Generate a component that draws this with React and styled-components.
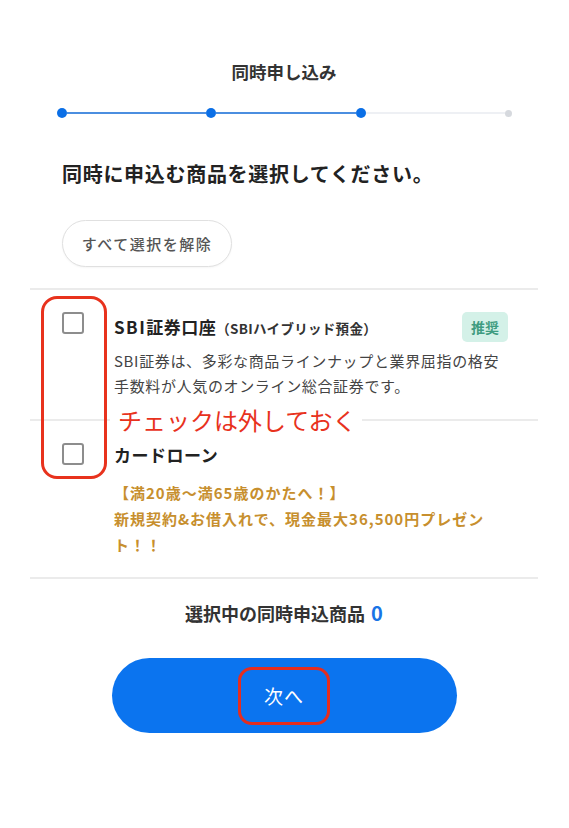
import React from 'react';
import styled, { createGlobalStyle } from 'styled-components';

const GlobalStyle = createGlobalStyle`
  html, body {
    margin: 0;
    padding: 0;
    background: #ffffff;
  }
  body {
    font-family: "Noto Sans CJK JP", "Noto Sans", sans-serif;
    color: #222;
  }
`

const Page = styled.div`
  width: 508px;
  margin-left: 30px;
  padding-top: 60px;
  padding-bottom: 80px;
`

const Title = styled.h1`
  margin: 0;
  text-align: center;
  font-size: 17.5px;
  line-height: 24px;
  font-weight: 700;
  color: #333;
`

const Stepper = styled.div`
  display: flex;
  align-items: center;
  height: 10px;
  margin: 24px 26px 0 27px;
`

const Dot = styled.span`
  flex: none;
  width: ${p => (p.$done ? '10px' : '7px')};
  height: ${p => (p.$done ? '10px' : '7px')};
  border-radius: 50%;
  background: ${p => (p.$done ? '#0b6fe6' : '#d6d9de')};
`

const Line = styled.span`
  flex: 1;
  height: 2px;
  background: ${p => (p.$done ? '#4b8ee0' : '#eef0f4')};
`

const Heading = styled.h2`
  margin: 42px 0 0 32px;
  font-size: 20px;
  line-height: 28px;
  font-weight: 700;
  letter-spacing: 0.7px;
  color: #222;
`

const ClearButton = styled.button`
  display: flex;
  align-items: center;
  justify-content: center;
  margin: 32px 0 0 32px;
  width: 170px;
  height: 47px;
  border: 1.5px solid #e0e0e0;
  border-radius: 24px;
  background: #fff;
  font-family: inherit;
  font-size: 15px;
  font-weight: 500;
  letter-spacing: 1.5px;
  color: #555;
  box-shadow: 0 1px 2px rgba(0, 0, 0, 0.04);
`

const ProductList = styled.div`
  position: relative;
  margin-top: 21px;
  border-top: 2px solid #ebebeb;
`

const Item = styled.div`
  display: grid;
  grid-template-columns: 22px 1fr;
  column-gap: 30px;
  padding: 22px 30px ${p => p.$bottom}px 32px;
  border-bottom: 2px solid #ebebeb;
`

const Checkbox = styled.span`
  display: block;
  box-sizing: border-box;
  width: 22px;
  height: 22px;
  border: 2px solid #8d8d8d;
  border-radius: 3px;
  background: #fff;
`

const ItemBody = styled.div`
  display: flex;
  flex-direction: column;
`

const ItemHeader = styled.div`
  display: flex;
  align-items: center;
  justify-content: space-between;
  min-height: 24px;
`

const ItemName = styled.span`
  font-size: 17px;
  line-height: 24px;
  font-weight: 700;
  letter-spacing: 0.5px;
  color: #222;
`

const Latin = styled.span`
  letter-spacing: 1.5px;
`

const ItemSub = styled.span`
  font-size: 13.5px;
  font-weight: 700;
  letter-spacing: 0.3px;
  color: #333;
`

const Badge = styled.span`
  display: flex;
  align-items: center;
  justify-content: center;
  width: 46px;
  height: 30px;
  border-radius: 5px;
  background: #d4f1e8;
  color: #3f9c80;
  font-size: 14px;
  font-weight: 700;
`

const Description = styled.p`
  margin: 6px 0 0;
  font-size: 15px;
  line-height: 25px;
  letter-spacing: 0.65px;
  color: #444;
`

const Promo = styled.p`
  margin: 13px 0 0;
  font-size: 15px;
  line-height: 26px;
  font-weight: 700;
  letter-spacing: 1px;
  color: #c78f2e;
`

const CheckHighlight = styled.div`
  position: absolute;
  left: 11px;
  top: 6px;
  width: 66px;
  height: 183px;
  box-sizing: border-box;
  border: 3.5px solid #e8321d;
  border-radius: 16px;
  pointer-events: none;
`

const Note = styled.div`
  position: absolute;
  left: 80px;
  top: 115px;
  padding: 0 5px 0 8px;
  background: #fff;
  font-size: 24px;
  line-height: 30px;
  font-weight: 400;
  color: #e8321d;
`

const Summary = styled.p`
  margin: 21px 0 0;
  text-align: center;
  font-size: 18px;
  line-height: 26px;
  font-weight: 700;
  color: #333;
`

const Count = styled.span`
  margin-left: 6px;
  font-size: 20px;
  color: #1a74e6;
`

const NextButton = styled.button`
  display: flex;
  align-items: center;
  justify-content: center;
  margin: 32px auto 0;
  width: 345px;
  height: 75px;
  border: none;
  border-radius: 38px;
  background: #0b74ef;
  font-family: inherit;
  color: #fff;
`

const NextLabel = styled.span`
  display: flex;
  align-items: center;
  justify-content: center;
  box-sizing: border-box;
  width: 92px;
  height: 58px;
  border: 3px solid #e52d1f;
  border-radius: 14px;
  font-size: 19px;
  font-weight: 400;
  letter-spacing: 1px;
`

const App = () => {
  return (
    <>
      <GlobalStyle />
      <Page>
        <Title>同時申し込み</Title>
        <Stepper>
          <Dot $done />
          <Line $done />
          <Dot $done />
          <Line $done />
          <Dot $done />
          <Line />
          <Dot />
        </Stepper>
        <Heading>同時に申込む商品を選択してください。</Heading>
        <ClearButton>すべて選択を解除</ClearButton>

        <ProductList>
          <Item $bottom={21}>
            <Checkbox />
            <ItemBody>
              <ItemHeader>
                <ItemName>
                  <Latin>SBI</Latin>証券口座<ItemSub>（SBIハイブリッド預金）</ItemSub>
                </ItemName>
                <Badge>推奨</Badge>
              </ItemHeader>
              <Description>
                SBI証券は、多彩な商品ラインナップと業界屈指の格安
                <br />
                手数料が人気のオンライン総合証券です。
              </Description>
            </ItemBody>
          </Item>
          <Item $bottom={19}>
            <Checkbox />
            <ItemBody>
              <ItemHeader>
                <ItemName>カードローン</ItemName>
              </ItemHeader>
              <Promo>
                【満20歳〜満65歳のかたへ！】
                <br />
                新規契約&お借入れで、現金最大36,500円プレゼン
                <br />
                ト！！
              </Promo>
            </ItemBody>
          </Item>
          <CheckHighlight />
          <Note>チェックは外しておく</Note>
        </ProductList>

        <Summary>
          選択中の同時申込商品<Count>0</Count>
        </Summary>
        <NextButton>
          <NextLabel>次へ</NextLabel>
        </NextButton>
      </Page>
    </>
  );
};

export default App;
